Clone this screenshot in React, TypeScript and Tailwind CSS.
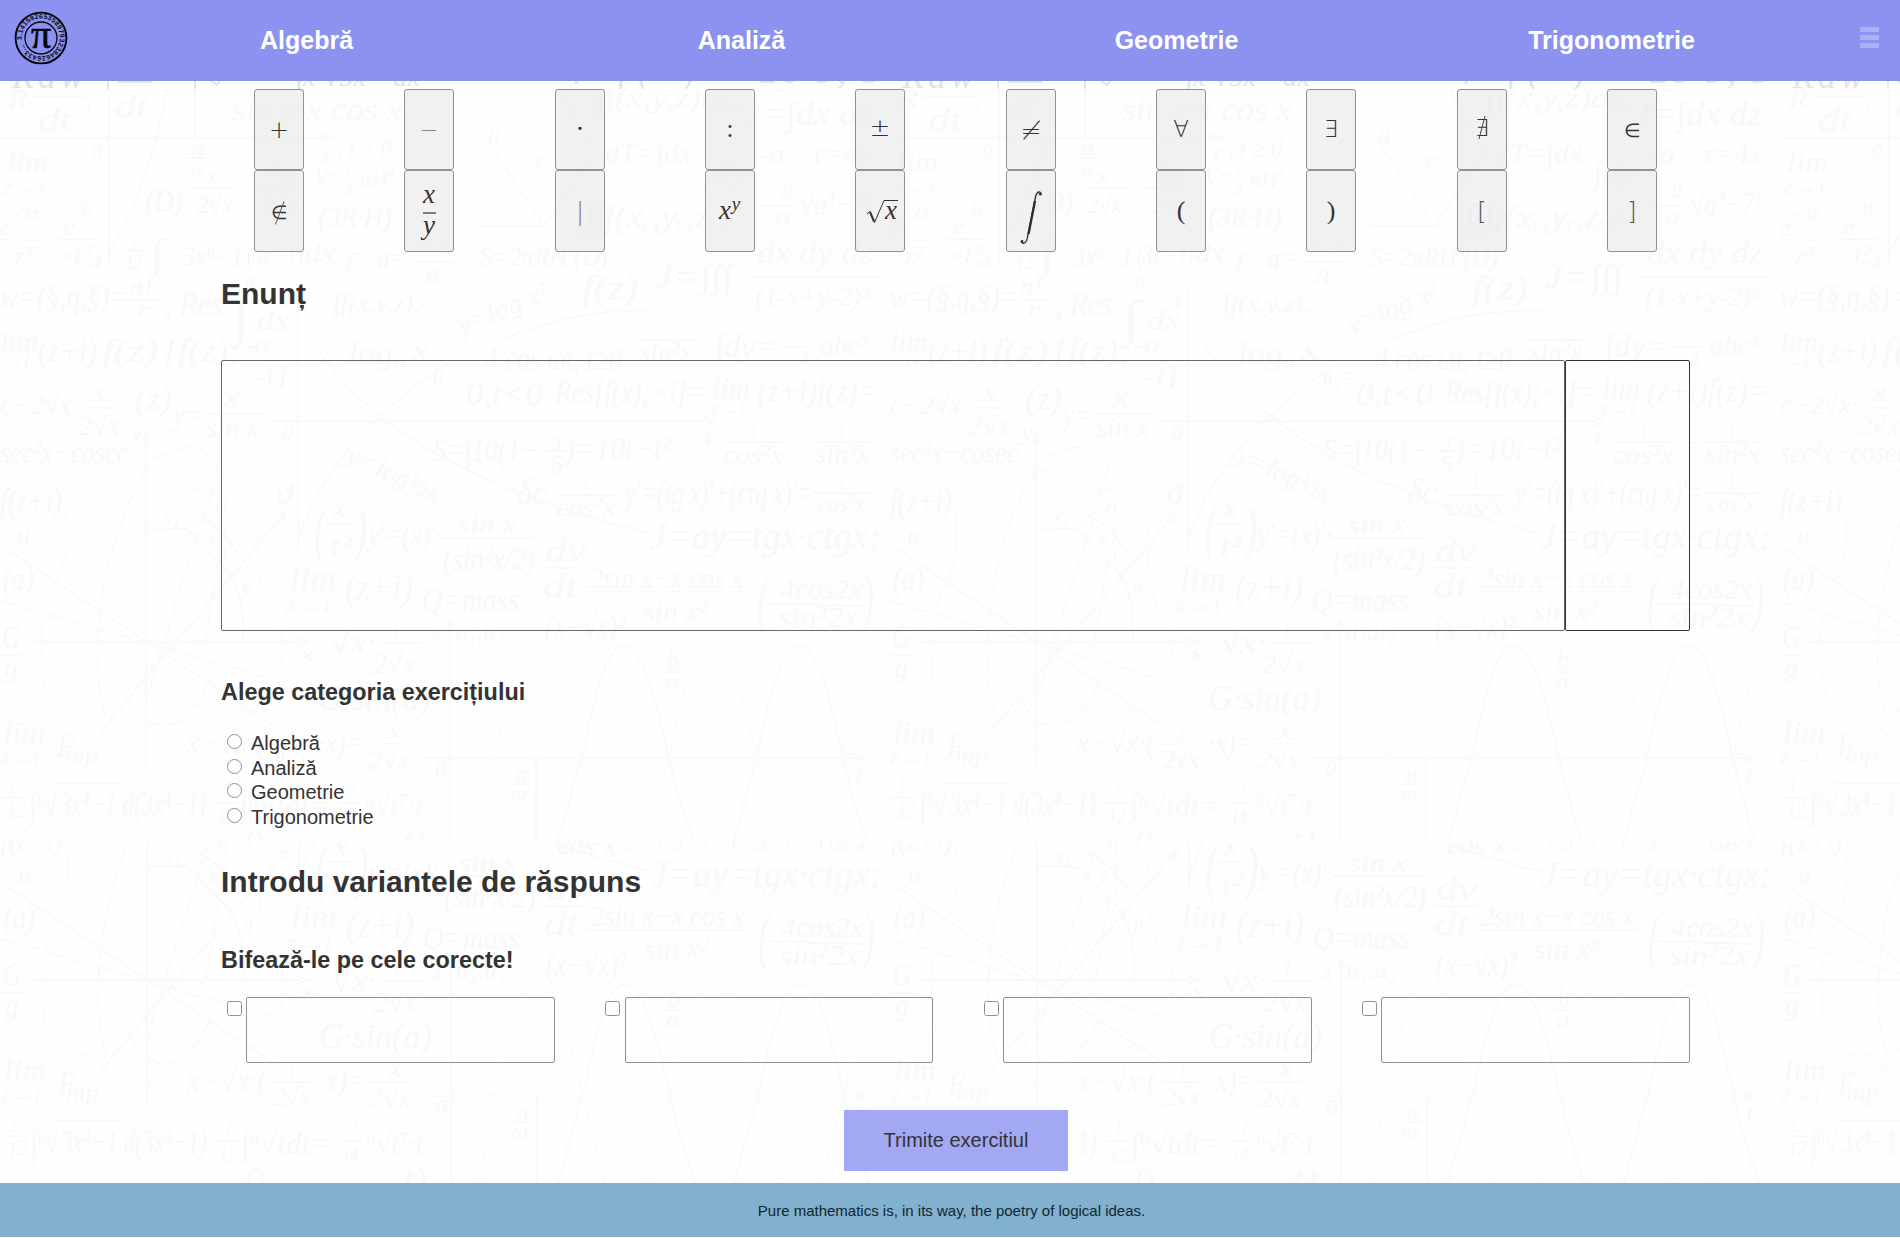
import React from "react";

type Note = [text: string, x: number, y: number, width: number, size: number];

const notes: Note[] = [
  ["R", 8, 108, 20, 28], ["dt", 38, 131, 34, 34], [";", 86, 108, 6, 28], ["dt", 115, 117, 33, 32],
  ["sin x·x cos x", 232, 121, 170, 34], ["0", 92, 158, 10, 20], ["lim", 7, 171, 41, 27], ["z→i", 3, 194, 42, 22],
  ["π", 190, 155, 15, 20], ["w", 190, 176, 15, 20], ["t", 323, 163, 8, 26], [", t ≥ 0", 338, 157, 54, 27],
  ["(D)", 145, 212, 38, 32], ["x", 206, 184, 12, 24], ["2√x", 197, 213, 35, 26], ["√x", 262, 180, 33, 28],
  ["2√x", 262, 213, 35, 26], ["V=", 315, 187, 26, 28], ["1", 345, 175, 6, 16], ["3", 344, 194, 8, 16],
  ["πH³", 360, 187, 34, 24], ["(3R·H)", 318, 227, 74, 30], ["e", 0, 235, 10, 24], ["-3z", 12, 220, 28, 18],
  ["z²", 14, 264, 19, 26], ["=", 49, 246, 9, 18], ["e", 63, 235, 12, 26], ["3i", 78, 215, 15, 18],
  ["-i²", 62, 262, 30, 24], ["-4", 82, 268, 20, 18], ["1", 131, 249, 6, 18], ["12", 126, 269, 16, 20],
  ["∫", 150, 267, 14, 40], ["3xⁿ−1", 183, 266, 60, 30], ["(3xⁿ−1)", 247, 265, 56, 30], ["dx", 305, 262, 30, 28],
  ["f", 345, 268, 10, 24], ["a=", 377, 268, 30, 30], ["π·2", 413, 253, 39, 22], ["π", 425, 283, 16, 26],
  ["w=(§,η,§)=", 0, 308, 128, 34], ["n!", 130, 294, 23, 24], ["r", 138, 316, 12, 22], [", Res", 165, 315, 57, 34],
  ["∫", 232, 335, 18, 50], ["a", 245, 288, 10, 20], ["dx", 257, 330, 33, 30], ["4", 283, 308, 8, 20],
  ["∫f(x,y,z),", 333, 312, 87, 26], ["0", 488, 145, 11, 24], ["r", 535, 168, 11, 24],
  ["∫∫(x,y,z)dz;", 595, 108, 150, 30], ["dT=∫dx", 605, 163, 87, 30], ["∫dy", 703, 184, 43, 32],
  ["J=∫dx dz", 745, 125, 127, 34], ["a", 774, 92, 10, 20], ["-a", 760, 163, 25, 28], ["τ=4x", 812, 163, 60, 28],
  ["∫∫∫f(xᵣ,yᵣ,zᵣ)", 575, 228, 155, 34], ["b", 782, 198, 10, 26], ["a", 775, 224, 16, 24],
  ["√a³−7¹", 800, 215, 72, 34], ["S=2πRH (D)", 480, 266, 128, 28], ["f(z)", 582, 300, 56, 36],
  ["J=∫∫∫", 655, 288, 78, 34], ["dx dy dz", 757, 263, 116, 32], ["(1-x+y-2)²", 755, 306, 114, 28],
  ["lim", 0, 350, 38, 26], ["→i", 5, 368, 24, 20], ["(z+i)", 38, 362, 59, 34], ["f(z)", 102, 362, 56, 34],
  ["[f(z);", 163, 362, 78, 34], ["-a", 243, 353, 27, 26], ["-i]", 253, 385, 36, 28], ["log", 348, 364, 45, 32],
  ["a", 394, 368, 12, 18], ["x", 411, 360, 18, 28], ["u₂=", 433, 385, 30, 28], ["c−2√x·", 0, 414, 78, 28],
  ["x", 92, 401, 15, 28], ["2√x", 78, 435, 42, 28], ["(z)", 135, 410, 37, 34], ["y=", 173, 426, 28, 32],
  ["x", 223, 407, 16, 30], ["sin x", 206, 437, 53, 30], ["sec²x−cosec", 0, 463, 128, 32], ["y", 131, 440, 12, 24],
  ["0", 282, 440, 11, 22], ["S=∫10(1−", 433, 461, 105, 34], ["T", 552, 452, 12, 22], ["5", 551, 473, 12, 26],
  [")=10t−t²", 565, 460, 106, 34], ["f(z+i)", 0, 512, 62, 34], ["u", 17, 545, 13, 26], ["(a)", 3, 590, 31, 34],
  ["G", 2, 648, 18, 34], ["g", 4, 677, 14, 30], ["x", 300, 661, 14, 22], ["ϑ", 276, 503, 16, 28],
  ["x₁", 163, 524, 16, 20], ["θ", 243, 595, 8, 20], ["x", 208, 545, 9, 18], ["r", 215, 512, 10, 18],
  ["(", 315, 550, 10, 62], [")", 355, 550, 12, 62], ["x", 333, 517, 14, 26], ["t²", 330, 556, 22, 30],
  ["y'=(x)'·", 368, 545, 74, 32], ["lim", 290, 590, 46, 34], ["z→i", 285, 612, 46, 24], ["(z+i)", 345, 600, 68, 38],
  ["Q=mass", 422, 611, 97, 34], ["√x·", 330, 653, 46, 32], ["1", 393, 637, 7, 24], ["2√x", 372, 674, 44, 30],
  ["u₁,u₂", 455, 640, 50, 26], ["4", 432, 643, 8, 22], ["4 cos ωt, t≥0", 485, 370, 137, 34],
  ["sin²x", 640, 361, 52, 28], ["∫dy=", 715, 357, 63, 32], ["4", 801, 365, 8, 20], ["abc²", 820, 355, 48, 30],
  ["0,t<0", 466, 405, 77, 34], ["Res[f(x);−i]=", 555, 403, 150, 34], ["lim", 712, 399, 38, 32],
  ["z→i", 711, 414, 34, 16], ["(z+i)f(z)=", 757, 402, 121, 34], ["1", 750, 437, 7, 24], ["cos²x", 723, 464, 60, 28],
  ["-", 796, 449, 9, 28], ["1", 838, 437, 7, 24], ["sin²x", 815, 463, 55, 28], ["t", 704, 445, 8, 24],
  ["δc", 517, 505, 30, 38], ["1", 582, 490, 7, 22], ["cos²x", 556, 516, 59, 28], ["y'=(tg x)'+(ctg x)'=", 625, 505, 188, 36],
  ["1", 838, 490, 7, 22], ["cos²x", 818, 512, 47, 26], ["J=ay=tgx·ctgx;", 650, 549, 231, 38],
  ["sin x", 458, 533, 58, 26], ["(sin²x/2)", 443, 570, 92, 34], ["dv", 545, 562, 41, 34], ["dt", 543, 597, 35, 34],
  ["2sin x−x cos x", 590, 588, 153, 30], ["sin x²", 643, 621, 65, 30], ["(x−√x)²", 545, 638, 80, 34],
  ["(", 757, 620, 12, 66], ["4cos2x", 780, 599, 82, 30], ["sin²2x", 778, 627, 80, 30], [")", 862, 620, 12, 66],
  ["b", 667, 669, 12, 28], ["a", 665, 689, 14, 24], ["π", 515, 781, 14, 22], ["ω", 511, 800, 16, 22], ["t", 855, 782, 9, 24],
  ["lim", 3, 743, 42, 32], ["z→i", 0, 764, 40, 24], ["F", 57, 757, 17, 34], ["mp", 65, 763, 33, 26],
  ["1", 9, 793, 7, 22], ["12", 7, 818, 19, 24], ["∫⁶√", 30, 817, 27, 36], ["3x⁴−1 d(3x⁴−1)", 60, 815, 146, 34],
  ["x−√x·(", 186, 753, 80, 32], ["1", 288, 742, 7, 22], ["2√x", 273, 768, 36, 26], ["·x)=", 318, 753, 46, 32],
  ["x", 388, 739, 14, 26], ["2√x", 368, 769, 42, 26], ["0", 435, 776, 11, 22], ["G·sin(a)", 318, 710, 113, 36],
  ["1", 225, 795, 6, 20], ["12", 218, 824, 18, 22], ["∫⁶√tdt=", 240, 816, 90, 32], ["1", 351, 795, 6, 20],
  ["14", 341, 824, 16, 22], ["⁶√t⁷·t", 365, 816, 58, 32], ["Q", 245, 850, 18, 30], ["t)", 402, 850, 24, 30],
];

const rules =
  "M33 97H85M0 138H326M109 81V268M195 81V137M168 81Q150 190 110 250M185 158H207M194 188H235M257 188H300M0 240H48M58 239H98M123 251H145M173 232H237" +
  "M411 262H455M130 300H157M298 290V552M757 206H792M747 277H882M500 340Q570 310 652 310M84 408H130M203 414H265M267 421H704M312 340Q390 470 652 534" +
  "M545 451H568M146 440V766M28 642H300M5 548L275 727M100 732L285 513M146 528L187 529L225 568M225 568Q245 590 243 640M0 655H22M195 515Q215 520 238 553" +
  "M298 540Q330 440 450 362M326 524H352M380 643H422M450 622V845M636 340H697M783 347H813M723 442H784M813 442H873M557 495H617M815 493H873M440 538H535M543 568H588" +
  "M585 592H747M760 603L865 606M663 672H682M512 784H532M536 758V845M420 758H862M0 798H27M55 783H120M270 744H312M367 744H412M215 803H238M338 803H362" +
  "M556 845C575 790 575 770 582 758C595 690 608 646 623 646C645 646 658 710 669 758C676 790 685 820 694 845M733 845C748 790 750 780 757 758C770 690 784 646 799 646C820 646 832 710 843 758C850 790 858 820 868 845" +
  "M320 134L332 138L320 142M704 416L714 421L704 426M296 638L308 642L296 646M852 753L864 758L852 763M274 517L286 512L282 524M143 445L146 435L150 445M447 630L450 620L454 630M545 226L594 153L555 81M480 226L545 226";

const dashes =
  "M492 148L545 226M146 470C90 560 90 690 108 720M153 460Q200 430 218 470L146 700M225 500V560M0 601L275 680M218 560Q200 680 200 642M130 700Q170 760 210 680";

const faint =
  "M478 845C488 800 490 780 495 758C508 690 520 646 535 646C558 646 570 710 582 758L604 845M646 845L669 758C682 690 695 646 710 646C735 646 745 710 757 758L782 845M820 845L843 758C855 690 868 660 878 652";

const blob =
  "M65 510Q90 465 146 470Q175 472 195 490Q245 480 258 530Q255 600 280 630Q290 680 250 712Q200 700 170 712Q160 745 130 755Q100 735 95 715Q40 730 42 660Q35 620 60 575Q70 545 65 510";

function Scribbles() {
  return (
    <g id="scribbles">
      <path d={rules} fill="none" stroke="#f9f9f9" strokeWidth="2" />
      <path d={dashes} fill="none" stroke="#f9f9f9" strokeWidth="2" strokeDasharray="16 8" />
      <path d={faint} fill="none" stroke="#fbfbfb" strokeWidth="2" strokeDasharray="9 2" />
      <path d={blob} fill="none" stroke="#fbfbfb" strokeWidth="2" />
      {notes.map(([text, x, y, width, size], i) => (
        <text key={i} x={x} y={y} fontSize={size} textLength={width} lengthAdjust="spacingAndGlyphs">
          {text}
        </text>
      ))}
      <text fontSize="28" transform="translate(345 462) rotate(24)">y=log½x</text>
      <text fontSize="28" transform="translate(462 335) rotate(-22)">y=log x²</text>
    </g>
  );
}

function Backdrop() {
  return (
    <svg
      className="pointer-events-none absolute top-0 left-0 font-['Liberation_Serif',serif] italic select-none"
      width="1900"
      height="1238"
      fill="#f8f8f8"
      aria-hidden="true"
    >
      <defs>
        <clipPath id="upper"><rect x="0" y="89" width="1900" height="753" /></clipPath>
        <clipPath id="lower"><rect x="0" y="842" width="1900" height="341" /></clipPath>
        <clipPath id="strip"><rect x="0" y="81" width="1900" height="8" /></clipPath>
        <Scribbles />
        <g id="edge" fontSize="36" fill="#e4e4e4">
          <text x="12" y="88" textLength="72">Rdw</text>
          <path d="M108 81V89M118 82H152M195 81V89M211 81L217 85L220 81" stroke="#e4e4e4" strokeWidth="2" fill="none" />
          <text x="295" y="86" fontSize="28" textLength="125">∫x √5x −dx</text>
          <text x="565" y="84" textLength="130">4 ∫( )</text>
          <text x="760" y="83" textLength="120">20 9, 5</text>
        </g>
      </defs>
      <g clipPath="url(#upper)">
        <use href="#scribbles" /><use href="#scribbles" x="890" /><use href="#scribbles" x="1780" />
      </g>
      <g clipPath="url(#lower)">
        <use href="#scribbles" x="1" y="338" /><use href="#scribbles" x="891" y="338" /><use href="#scribbles" x="1781" y="338" />
      </g>
      <g clipPath="url(#strip)">
        <use href="#edge" /><use href="#edge" x="890" /><use href="#edge" x="1780" />
      </g>
    </svg>
  );
}

function Logo() {
  return (
    <svg width="54" height="54" viewBox="0 0 54 54" aria-label="Pi">
      <defs><path id="ring" d="M8.2 29A18.9 18.9 0 1 1 8.6 31" /></defs>
      <circle cx="27" cy="27" r="25.4" fill="none" stroke="#050508" strokeWidth="1.9" />
      <circle cx="27" cy="27" r="16" fill="none" stroke="#050508" strokeWidth="1.3" />
      <text className="font-['Liberation_Sans',sans-serif] font-bold" fontSize="6.8" fill="#050508">
        <textPath href="#ring" textLength="114">3.1415926535897932384626433…</textPath>
      </text>
      <text className="font-['Liberation_Serif',serif]" x="27" y="36.5" fontSize="40" textAnchor="middle" fill="#050508" stroke="#050508" strokeWidth="0.6">π</text>
    </svg>
  );
}

type Sign = { name: string; draw: React.ReactNode };

const light = "font-['DejaVu_Sans',sans-serif] font-extralight";
const serif = "font-['Liberation_Serif',serif]";
const italic = "font-['Liberation_Serif',serif] italic";

const sign = (char: string, y: number, size: number, cls = light, fill = "#333"): Sign => ({
  name: char,
  draw: <text className={cls} x="25" y={y} fontSize={size} textAnchor="middle" fill={fill}>{char}</text>,
});

const topSigns: Sign[] = [
  sign("+", 49, 24), sign("−", 49, 23, light, "#888"), sign("·", 49, 28, serif), sign(":", 48, 25, serif), sign("±", 47, 25),
  sign("≠", 50, 25), sign("∀", 48, 23), sign("∃", 48, 23),
  {
    name: "∄",
    draw: (
      <>
        <text className={light} x="25" y="47" fontSize="23" textAnchor="middle">∃</text>
        <path d="M28 27L22 50" stroke="#444" />
      </>
    ),
  },
  sign("∈", 48, 19),
];

const bottomSigns: Sign[] = [
  {
    name: "∉",
    draw: (
      <>
        <text className={light} x="25" y="48" fontSize="19" textAnchor="middle">∈</text>
        <path d="M30 30.500L21.500 53.500" stroke="#555" />
      </>
    ),
  },
  {
    name: "x/y",
    draw: (
      <>
        <text className={italic} x="25" y="32" fontSize="27" textAnchor="middle">x</text>
        <path d="M19 42H32" stroke="#333" strokeWidth="1.2" />
        <text className={italic} x="25" y="63" fontSize="27" textAnchor="middle">y</text>
      </>
    ),
  },
  sign("|", 49, 24, light, "#777"),
  {
    name: "x^y",
    draw: (
      <>
        <text className={italic} x="20" y="48" fontSize="27" textAnchor="middle">x</text>
        <text className={italic} x="31" y="39" fontSize="19" textAnchor="middle">y</text>
      </>
    ),
  },
  {
    name: "√x",
    draw: (
      <>
        <path d="M12 43L15 40.5L19.5 51.5L29 29.5H43" fill="none" stroke="#333" strokeWidth="1" />
        <path d="M15 41L19 50.5" stroke="#333" strokeWidth="2" />
        <text className={italic} x="36" y="48" fontSize="27" textAnchor="middle">x</text>
      </>
    ),
  },
  {
    name: "∫",
    draw: (
      <>
        <path d="M35 23.5C35 20 31 19.5 29.5 26L21.5 66C20.5 73 16.5 73.5 15.5 70.5" fill="none" stroke="#2b2b33" strokeWidth="1.3" />
        <path d="M29 30L22.5 63" stroke="#2b2b33" strokeWidth="2.3" />
        <circle cx="34.3" cy="23.2" r="1.4" fill="#333" />
        <circle cx="16" cy="70.5" r="1.4" fill="#333" />
      </>
    ),
  },
  sign("(", 48, 26, serif), sign(")", 48, 26, serif), sign("[", 49, 25, light, "#555"), sign("]", 49, 25, light, "#555"),
];

function SignRow({ signs, tall }: { signs: Sign[]; tall?: boolean }) {
  return (
    <div className="grid grid-cols-10 justify-items-center">
      {signs.map((s) => (
        <button
          key={s.name}
          aria-label={s.name}
          className={`w-[50px] rounded-[3px] border border-[#919191] bg-[#eaeaea]/65 ${tall ? "h-[82px]" : "h-[81px]"}`}
        >
          <svg className="-m-px" width="50" height="81" fill="#333">{s.draw}</svg>
        </button>
      ))}
    </div>
  );
}

const categories = ["Algebră", "Analiză", "Geometrie", "Trigonometrie"];

export default function App() {
  return (
    <div className="relative h-[1238px] w-[1900px] overflow-hidden bg-[#fefefe] font-['Liberation_Sans',Arial,sans-serif] text-[#333]">
      <Backdrop />
      <div className="relative">
        <header className="flex h-[81px] items-center bg-[#8c92f0]">
          <div className="-mt-[6px] w-[89px] pl-[14px]"><Logo /></div>
          <nav className="grid w-[1740px] grid-cols-4 pb-[2px] text-center text-[25px] leading-[28px] font-bold text-white">
            {categories.map((c) => <a key={c} href="#">{c}</a>)}
          </nav>
          <div className="-mt-[6px] ml-[31px] flex flex-col gap-[3px]">
            <span className="h-[5px] w-[19px] bg-[#abaff4]" />
            <span className="h-[5px] w-[19px] bg-[#abaff4]" />
            <span className="h-[5px] w-[19px] bg-[#abaff4]" />
          </div>
        </header>

        <section className="h-[761px] pt-2">
          <div className="ml-[204px] w-[1503px]">
            <SignRow signs={topSigns} />
            <SignRow signs={bottomSigns} tall />
          </div>
          <div className="ml-[221px] w-[1469px]">
            <h2 className="mt-[25px] text-[30px] leading-[34px] font-bold">Enunț</h2>
            <div className="mt-[49px] flex h-[271px]">
              <textarea className="w-[1344px] resize-none rounded-[2px] border border-[#666]" />
              <div className="w-[125px] rounded-[2px] border border-[#333]" />
            </div>
            <h3 className="mt-[48px] text-[23.4px] leading-[27px] font-bold">Alege categoria exercițiului</h3>
            <div className="mt-[25px]">
              {categories.map((c) => (
                <label key={c} className="flex h-[24.67px] items-start text-[20px] leading-[24.67px]">
                  <input type="radio" name="category" className="mt-[3px] mr-[9px] ml-[6px] size-[15px] opacity-80" />
                  {c}
                </label>
              ))}
            </div>
          </div>
        </section>

        <section className="h-[341px] pt-[23px]">
          <div className="ml-[221px] w-[1469px]">
            <h2 className="text-[30px] leading-[34px] font-bold">Introdu variantele de răspuns</h2>
            <h3 className="mt-[48px] text-[23.4px] leading-[27px] font-bold">Bifează-le pe cele corecte!</h3>
            <div className="mt-[23px] flex justify-between">
              {categories.map((c) => (
                <div key={c} className="flex w-[334px] items-start pl-[6px]">
                  <input type="checkbox" className="mt-1 mr-[4.4px] size-[15px] shrink-0 opacity-80" />
                  <textarea className="h-[66px] w-[308.6px] resize-none rounded-[2px] border border-[#919191]" />
                </div>
              ))}
            </div>
          </div>
          <button className="mt-[47px] ml-[844px] block h-[61px] w-[224px] bg-[#8c92f0]/80 pb-[2px] text-[20px]">Trimite exercitiul</button>
        </section>

        <footer className="flex h-[54px] items-center justify-center bg-[#82b1cf] pt-[2px] pl-[3px] text-[15px] text-[#10262f]">
          Pure mathematics is, in its way, the poetry of logical ideas.
        </footer>
      </div>
    </div>
  );
}
